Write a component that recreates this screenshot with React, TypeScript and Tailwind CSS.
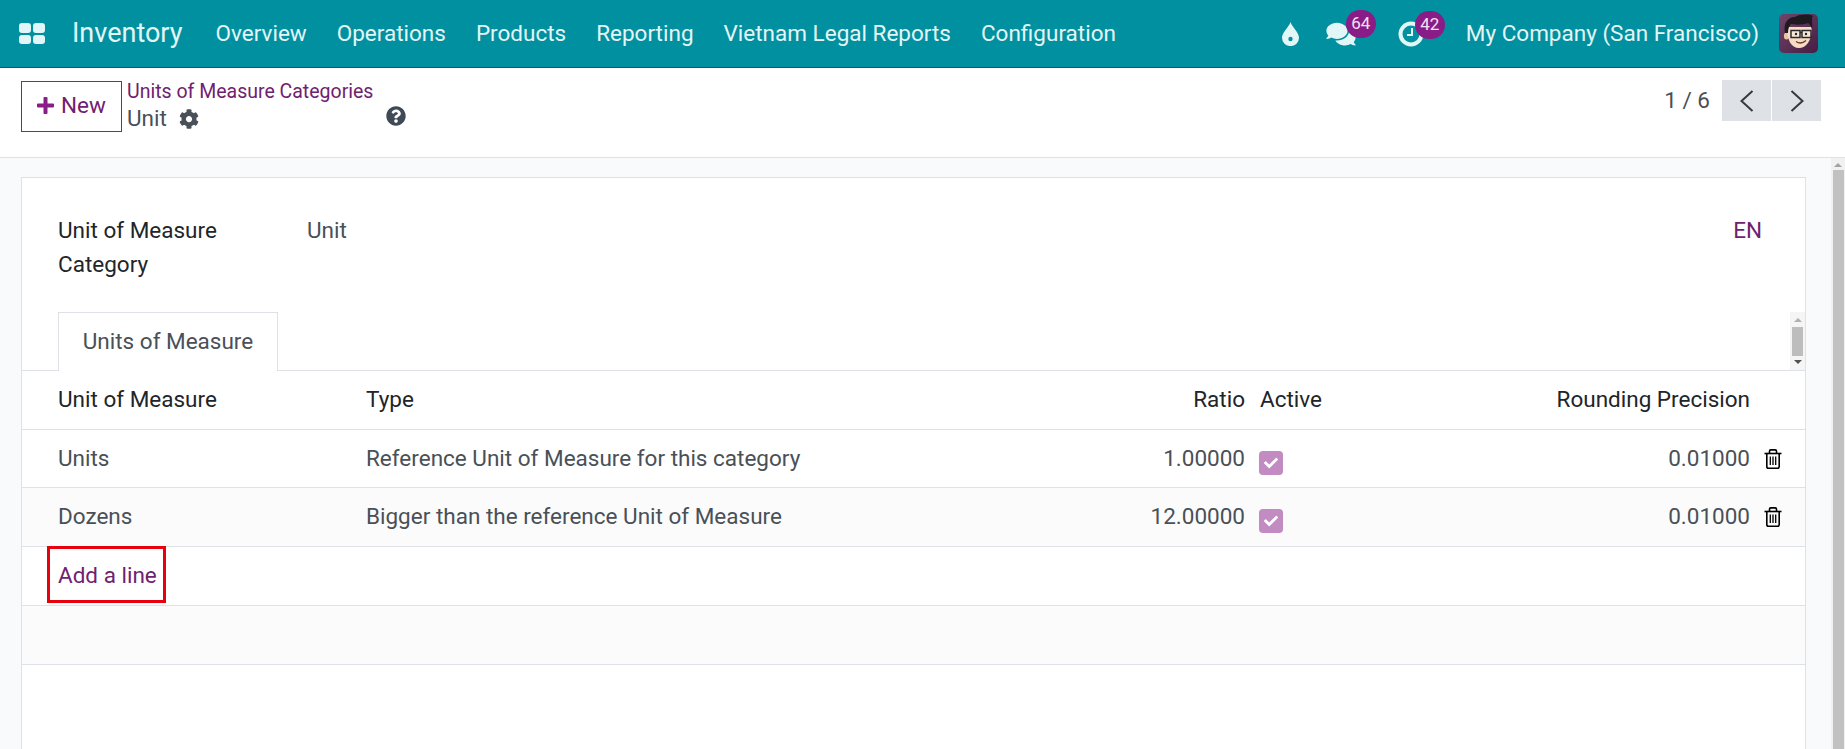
import { FaCheck, FaCog, FaComments, FaQuestionCircle } from "react-icons/fa";

const rowGrid = "grid grid-cols-[344px_634px_245px_156px_349px_55px] items-center";

const menus = ["Overview", "Operations", "Products", "Reporting", "Vietnam Legal Reports", "Configuration"];

const lines = [
  { name: "Units", type: "Reference Unit of Measure for this category", ratio: "1.00000", cls: "h-[58px] bg-white" },
  { name: "Dozens", type: "Bigger than the reference Unit of Measure", ratio: "12.00000", cls: "h-[59px] bg-[#fbfbfb]" },
];

function AppsIcon() {
  return (
    <div className="grid h-[21px] w-[26px] grid-cols-2 gap-[2px]">
      <span className="rounded-[3px] bg-[#e3f6f7]" />
      <span className="rounded-[3px] bg-[#e3f6f7]" />
      <span className="rounded-[3px] bg-[#e3f6f7]" />
      <span className="rounded-[3px] bg-[#e3f6f7]" />
    </div>
  );
}

function DropIcon() {
  return (
    <svg width="17" height="24" viewBox="0 0 17 24">
      <path d="M8.5 0C10 5 17 10.500 17 15.800A8.400 8.200 0 0 1 0 15.800C0 10.500 7 5 8.500 0Z" fill="#e3f6f7" />
      <circle cx="8.500" cy="17" r="2.200" fill="#01909f" />
    </svg>
  );
}

function ClockIcon() {
  return (
    <svg width="28" height="26" viewBox="0 0 28 26" fill="none" stroke="#e3f6f7">
      <circle cx="13" cy="13" r="10.500" strokeWidth="4" />
      <path d="M14 7v7H9" strokeWidth="2" />
    </svg>
  );
}

function TrashIcon() {
  return (
    <svg width="18" height="20" viewBox="0 0 18 20" fill="none" stroke="#000" strokeWidth="1.600">
      <path d="M0.500 4.500H17.500" />
      <path d="M5.500 4.500V2.200Q5.500 0.900 6.800 0.900H11.200Q12.500 0.900 12.500 2.200V4.500" />
      <path d="M2.800 4.500V17.400Q2.800 19.200 4.600 19.200H13.400Q15.200 19.200 15.200 17.400V4.500" />
      <path d="M6.300 7.500V16M9 7.500V16M11.700 7.500V16" strokeWidth="1.300" />
    </svg>
  );
}

function PlusIcon() {
  return (
    <svg width="17" height="17" viewBox="0 0 17 17" fill="#8a1c87">
      <path d="M6.500 1Q6.500 0 7.500 0H9.500Q10.500 0 10.500 1V6.500H16Q17 6.500 17 7.500V9.500Q17 10.500 16 10.500H10.500V16Q10.500 17 9.500 17H7.500Q6.500 17 6.500 16V10.500H1Q0 10.500 0 9.500V7.500Q0 6.500 1 6.500H6.500Z" />
    </svg>
  );
}

function Chevron({ points }: { points: string }) {
  return (
    <svg width="14" height="22" viewBox="0 0 14 22" fill="none" stroke="#343a40" strokeWidth="2">
      <polyline points={points} />
    </svg>
  );
}

function Avatar() {
  return (
    <svg width="39" height="39" viewBox="0 0 39 39" className="rounded-[5px]">
      <defs>
        <linearGradient id="avatarBg" x1="0" y1="0" x2="1" y2="1">
          <stop offset="0" stopColor="#6f4468" />
          <stop offset="1" stopColor="#471d44" />
        </linearGradient>
      </defs>
      <rect width="39" height="39" fill="url(#avatarBg)" />
      <ellipse cx="7.500" cy="22" rx="2.600" ry="3.600" fill="#eac3a4" />
      <path d="M8 13C8 26 12 34 20 34C27 34 33 27 33 13Z" fill="#f6dcc4" />
      <path d="M6 19C4 9 9 3 16 3C21 0 30 0 34 2C32 4 34 8 33 16C32 12 31 10 29 9C24 11 16 11 12 10C10 12 9 15 9 19Z" fill="#1d1b20" />
      <rect x="12" y="16.500" width="9" height="7" fill="#f6e9dc" stroke="#2b2b2b" strokeWidth="1.500" />
      <rect x="23" y="16.500" width="9" height="7" fill="#f6e9dc" stroke="#2b2b2b" strokeWidth="1.500" />
      <path d="M21 18.500H23" stroke="#2b2b2b" strokeWidth="1.500" />
      <circle cx="17" cy="20" r="1.200" fill="#222" />
      <circle cx="27" cy="20" r="1.200" fill="#222" />
      <path d="M17 27.500Q22 31 27 26.500" fill="none" stroke="#6b3a2a" strokeWidth="1.300" />
    </svg>
  );
}

function Badge({ value, cls }: { value: string; cls: string }) {
  return (
    <span className={`absolute flex h-[28px] w-[30px] items-center justify-center rounded-full bg-[#8a1c87] text-[17px] text-[#f3e3f2] ${cls}`}>
      {value}
    </span>
  );
}

function Navbar() {
  return (
    <nav className="flex h-[68px] shrink-0 items-center border-b border-[#01616c] bg-[#01909f] pl-[19px] text-[#e3f6f7]">
      <AppsIcon />
      <span className="ml-[27px] mr-[3px] text-[27px]">Inventory</span>
      {menus.map((m) => (
        <span key={m} className="ml-[30px] text-[22.500px]">
          {m}
        </span>
      ))}
      <div className="ml-auto flex items-center pr-[27px]">
        <DropIcon />
        <div className="relative ml-[27px] flex h-[24px] w-[30px] items-center">
          <FaComments className="h-[26px] w-[30px]" />
          <Badge value="64" cls="left-[20px] top-[-12px]" />
        </div>
        <div className="relative ml-[42px] h-[26px] w-[28px]">
          <ClockIcon />
          <Badge value="42" cls="left-[17px] top-[-10px]" />
        </div>
        <span className="ml-[40px] text-[22.500px]">My Company (San Francisco)</span>
        <div className="ml-[20px] flex">
          <Avatar />
        </div>
      </div>
    </nav>
  );
}

function ControlPanel() {
  return (
    <div className="flex h-[90px] shrink-0 items-start border-b border-[#dee2e6] bg-white pl-[21px] pr-[24px]">
      <button className="mt-[13px] flex h-[51px] w-[101px] items-center justify-center gap-[7px] border border-[#7c2a7c] pb-[2px] text-[22.500px] text-[#702170]">
        <PlusIcon />
        New
      </button>
      <div className="ml-[5px] mt-[10px] flex flex-col">
        <span className="text-[19.500px] leading-[27px] text-[#702170]">Units of Measure Categories</span>
        <div className="flex items-center text-[22.500px] leading-[27px] text-[#495057]">
          Unit
          <FaCog className="ml-[12px] h-[20px] w-[20px]" />
          <FaQuestionCircle className="ml-[187px] mt-[-5px] h-[20px] w-[20px] text-[#3f4a56]" />
        </div>
      </div>
      <div className="ml-auto mt-[12px] flex items-center">
        <span className="mr-[12px] text-[22.500px] text-[#495057]">1 / 6</span>
        <button className="flex h-[41px] w-[49px] items-center justify-center bg-[#dee2e6]">
          <Chevron points="12.500,1 1.500,11 12.500,21" />
        </button>
        <button className="ml-[1px] flex h-[41px] w-[49px] items-center justify-center bg-[#dee2e6]">
          <Chevron points="1.500,1 12.500,11 1.500,21" />
        </button>
      </div>
    </div>
  );
}

function TabScrollbar() {
  return (
    <div className="absolute bottom-0 right-0 top-0 flex w-[15px] flex-col items-center bg-[#f5f5f5]">
      <span className="mt-[6px] h-0 w-0 border-x-[4px] border-b-[4px] border-x-transparent border-b-[#b0b0b0]" />
      <span className="mt-[5px] h-[29px] w-[11px] bg-[#bdbdbd]" />
      <span className="mt-[4px] h-0 w-0 border-x-[4px] border-t-[4px] border-x-transparent border-t-[#505050]" />
    </div>
  );
}

function PageScrollbar() {
  return (
    <div className="flex w-[14px] shrink-0 flex-col items-center bg-[#f1f1f1]">
      <span className="mt-[5px] h-0 w-0 border-x-[4px] border-b-[4px] border-x-transparent border-b-[#a3a3a3]" />
      <span className="mt-[3px] w-[11px] flex-1 bg-[#c1c1c1]" />
    </div>
  );
}

function Sheet() {
  return (
    <div className="ml-[21px] mt-[19px] flex w-[1785px] flex-col self-stretch border-x border-t border-[#dee2e6] bg-white">
      <div className="flex pl-[36px] pr-[43px] pt-[35px] text-[22.500px] leading-[34px]">
        <div className="w-[249px] text-[#212529]">
          Unit of Measure
          <br />
          Category
        </div>
        <span className="text-[#495057]">Unit</span>
        <span className="ml-auto text-[#702170]">EN</span>
      </div>
      <div className="relative mt-[31px] flex h-[59px] border-b border-[#dee2e6] pl-[36px]">
        <div className="flex h-[59px] w-[220px] items-center justify-center border-x border-t border-[#dee2e6] bg-white text-[22.500px] text-[#495057]">
          Units of Measure
        </div>
        <TabScrollbar />
      </div>
      <div className={`${rowGrid} h-[59px] border-b border-[#dee2e6] text-[22.500px] text-[#212529]`}>
        <span className="pl-[36px]">Unit of Measure</span>
        <span>Type</span>
        <span className="text-right">Ratio</span>
        <span className="pl-[15px]">Active</span>
        <span className="text-right">Rounding Precision</span>
      </div>
      {lines.map((l) => (
        <div key={l.name} className={`${rowGrid} border-b border-[#dee2e6] text-[22.500px] text-[#495057] ${l.cls}`}>
          <span className="pl-[36px]">{l.name}</span>
          <span>{l.type}</span>
          <span className="text-right">{l.ratio}</span>
          <div className="pl-[14px] pt-[8px]">
            <span className="flex h-[24px] w-[24px] items-center justify-center rounded-[4px] bg-[#c28bc1]">
              <FaCheck className="h-[14px] w-[14px] text-white" />
            </span>
          </div>
          <span className="text-right">0.01000</span>
          <div className="flex pl-[14px]">
            <TrashIcon />
          </div>
        </div>
      ))}
      <div className="relative flex h-[59px] items-center border-b border-[#dee2e6] pl-[36px] text-[22.500px] text-[#702170]">
        Add a line
        <span className="absolute left-[25px] top-[-1px] h-[57px] w-[119px] border-[3px] border-[#e8000d]" />
      </div>
      <div className="h-[59px] border-b border-[#dee2e6] bg-[#fbfbfb]" />
    </div>
  );
}

export default function App() {
  return (
    <div className="flex h-screen flex-col overflow-hidden bg-[#f9fafb] font-['Roboto',sans-serif]">
      <Navbar />
      <ControlPanel />
      <div className="flex min-h-0 flex-1 justify-between">
        <Sheet />
        <PageScrollbar />
      </div>
    </div>
  );
}
